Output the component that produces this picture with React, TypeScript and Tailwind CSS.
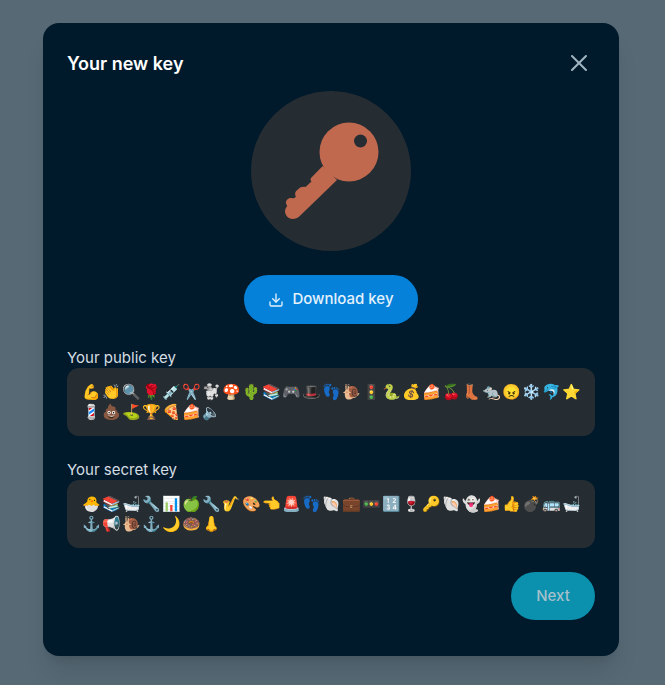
import { X, Download } from 'lucide-react';

const publicKey = ['💪', '👏', '🔍', '🌹', '💉', '✂️', '🐩', '🍄', '🌵', '📚', '🎮', '🎩', '👣', '🐌', '🚦', '🐍', '💰', '🍰', '🍒', '👢', '🐀', '😠', '❄️', '🐬', '⭐', '💈', '💩', '⛳', '🏆', '🍕', '🍰', '🔈'];
const secretKey = ['🐣', '📚', '🛁', '🔧', '📊', '🍏', '🔧', '🎷', '🎨', '👈', '🚨', '👣', '🐚', '💼', '🚥', '🔢', '🍷', '🔑', '🐚', '👻', '🍰', '👍', '💣', '🚌', '🛁', '⚓', '📢', '🐌', '⚓', '🌙', '🍩', '👃'];

function KeyBox({ label, value }: { label: string; value: string[] }) {
  return (
    <div className="flex flex-col">
      <div className="text-[15px] leading-5 text-[#d5dde2]">{label}</div>
      <div className="rounded-xl bg-[#252d33] p-3.5 h-[68px] flex flex-wrap content-start">
        {value.map((emoji, i) => (
          <span key={i} className="w-5 h-5 flex items-center justify-center text-[15px] leading-5">{emoji}</span>
        ))}
      </div>
    </div>
  );
}

export default function App() {
  return (
    <div className="h-[685px] w-[665px] bg-[#566975] pl-[43px] pt-[23px] font-['Inter',sans-serif]">
      <div className="w-[576px] h-[633px] rounded-2xl bg-[#011a2b] shadow-xl p-6 flex flex-col">
        <div className="flex items-center justify-between h-8">
          <h2 className="text-lg font-semibold text-white pt-0.5">Your new key</h2>
          <X className="w-7 h-7 mr-0.5 text-[#9fb3c0]" strokeWidth={1.75} />
        </div>
        <div className="flex justify-center mt-3">
          <div className="w-40 h-40 rounded-full bg-[#252d33]">
            <svg viewBox="0 0 160 160" className="w-40 h-40">
              <circle cx="98" cy="61" r="29.5" fill="#c1694f" />
              <path fill="#c1694f" d="M71.700 75 L86 89 L48.500 125.300 C44 129.500 37.500 128.500 35 124 C33.500 121 33.500 118 36.300 115 C34.500 113 34.500 110 36 109 C37.500 107 40 106.500 42 107.500 L45 106 C43.500 103 44 100 47 98.500 C49 96 52 95.500 54.500 96 L60.500 90.500 C59 89 59.500 87.500 60.500 86.500 Z" />
              <circle cx="109.500" cy="50" r="6.500" fill="#252d33" />
            </svg>
          </div>
        </div>
        <div className="flex justify-center mt-6">
          <button className="h-[49px] w-[174px] rounded-full bg-[#0581da] text-[#e3f1fb] text-[15px] font-medium flex items-center justify-center gap-2">
            <Download className="w-4 h-4" />
            <span className="-mt-px">Download key</span>
          </button>
        </div>
        <div className="mt-6 flex flex-col gap-6">
          <KeyBox label="Your public key" value={publicKey} />
          <KeyBox label="Your secret key" value={secretKey} />
        </div>
        <div className="flex justify-end mt-6">
          <button className="h-12 w-[84px] rounded-full bg-[#0b90ae] text-[#a5c0cb] text-[15px] font-medium">Next</button>
        </div>
      </div>
    </div>
  );
}
